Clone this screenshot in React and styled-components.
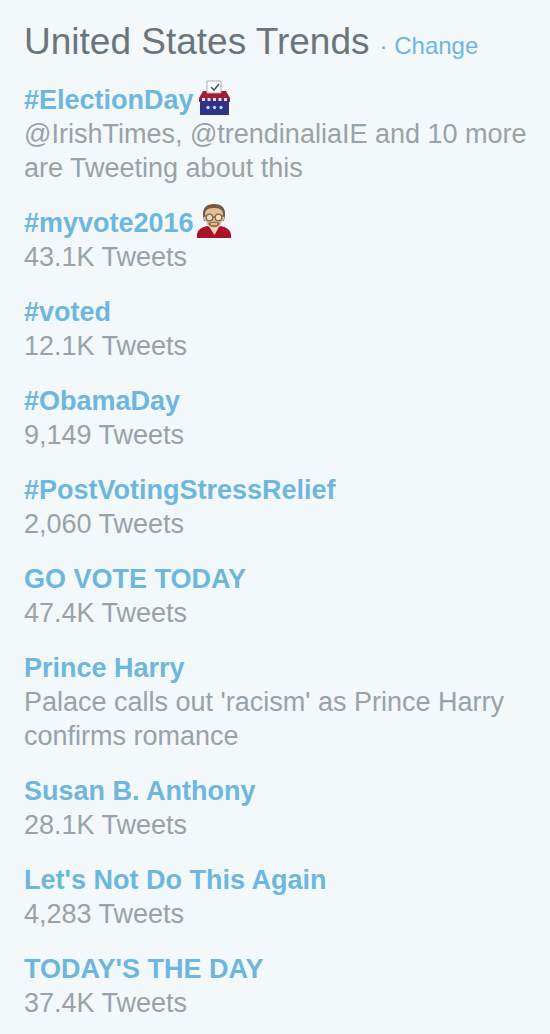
import React from 'react';

import styled, { createGlobalStyle } from 'styled-components';

const GlobalStyle = createGlobalStyle`
  body {
    margin: 0;
    background: #f3f8fa;
    font-family: "Liberation Sans", Arial, sans-serif;
  }
`;

const Container = styled.section`
  padding: 20px 16px 14px 24px;
  color: #97a3a8;
  font-size: 27px;
  line-height: 34px;
`;

const Header = styled.header`
  display: flex;
  align-items: baseline;
  gap: 10px;
  margin-bottom: 15px;
  line-height: 44px;
`;

const Title = styled.h2`
  margin: 0;
  color: #69757b;
  font-size: 37px;
  font-weight: normal;
`;

const Change = styled.span`
  font-size: 24px;
`;

const Link = styled.a`
  color: #6db7de;
  text-decoration: none;

  &:hover {
    text-decoration: underline;
  }
`;

const List = styled.ul`
  display: flex;
  flex-direction: column;
  gap: 21px;
  margin: 0;
  padding: 0;
  list-style: none;
`;

const Name = styled(Link)`
  display: flex;
  align-items: center;
  height: 34px;
  font-weight: bold;
`;

const Icon = styled.svg`
  width: 36px;
  height: 36px;
  margin: 0 0 4px 2px;
  flex: none;
`;

const Detail = styled.p`
  margin: 0;
`;

const BallotBox = () => (
  <Icon viewBox="0 0 36 36" aria-hidden="true">
    <path d="M7 11h23l4 7v4H3v-4z" fill="#a51d35" />
    <path d="M4 19h29v16H4z" fill="#2e3389" />
    <path d="M11 1h14v12H11z" fill="#fff" stroke="#a9adb3" />
    <path d="M15 7l3 3 5-6" fill="none" stroke="#4b5964" strokeWidth="1.6" />
    <path d="M6 19.500h25" stroke="#f3dbe4" strokeWidth="3" strokeDasharray="3 2.500" />
    <g fill="#c5cdf2">
      <circle cx="12" cy="27.500" r="1.700" />
      <circle cx="18.500" cy="27.500" r="1.700" />
      <circle cx="25" cy="27.500" r="1.700" />
    </g>
  </Icon>
);

const Voter = () => (
  <Icon viewBox="0 0 36 36" aria-hidden="true">
    <path d="M1 35v-4q1-6 10-8l7 2 7-2q9 2 10 8v4z" fill="#aa1228" />
    <path d="M12 22h12l-5.500 10z" fill="#f3d3bd" />
    <path d="M7 13Q6 1 18 1t11 12l-1 5H8z" fill="#755a43" />
    <path d="M9 10q1-5 9-5t9 5v3q2 0 1 4l-2 1q-1 7-8 7t-8-7l-2-1q-1-4 1-4z" fill="#e5bd96" />
    <path d="M12 20q6-3 12 0-1 4-6 4t-6-4z" fill="#967355" />
    <path d="M15 21h6" stroke="#f0d4b7" strokeWidth="1.500" />
    <g fill="#f2d9b5" stroke="#80664d" strokeWidth="1.300">
      <circle cx="13.500" cy="14.500" r="3.300" />
      <circle cx="22.500" cy="14.500" r="3.300" />
      <path d="M17 14h2M8 13h2M26 13h2" />
    </g>
  </Icon>
);

const trends = [
  { name: '#ElectionDay', icon: <BallotBox />, detail: '@IrishTimes, @trendinaliaIE and 10 more are Tweeting about this' },
  { name: '#myvote2016', icon: <Voter />, detail: '43.1K Tweets' },
  { name: '#voted', detail: '12.1K Tweets' },
  { name: '#ObamaDay', detail: '9,149 Tweets' },
  { name: '#PostVotingStressRelief', detail: '2,060 Tweets' },
  { name: 'GO VOTE TODAY', detail: '47.4K Tweets' },
  { name: 'Prince Harry', detail: 'Palace calls out \'racism\' as Prince Harry confirms romance' },
  { name: 'Susan B. Anthony', detail: '28.1K Tweets' },
  { name: 'Let\'s Not Do This Again', detail: '4,283 Tweets' },
  { name: 'TODAY\'S THE DAY', detail: '37.4K Tweets' }
];

class App extends React.Component {
  render() {
    return (
      <Container>
        <GlobalStyle />
        <Header>
          <Title>United States Trends</Title>
          <Change>· <Link href="#change">Change</Link></Change>
        </Header>

        <List>
          {trends.map((trend) => (
            <li key={trend.name}>
              <Name href="#trend">{trend.name}{trend.icon}</Name>
              <Detail>{trend.detail}</Detail>
            </li>
          ))}
        </List>
      </Container>
    )
  }
}
export default App;
